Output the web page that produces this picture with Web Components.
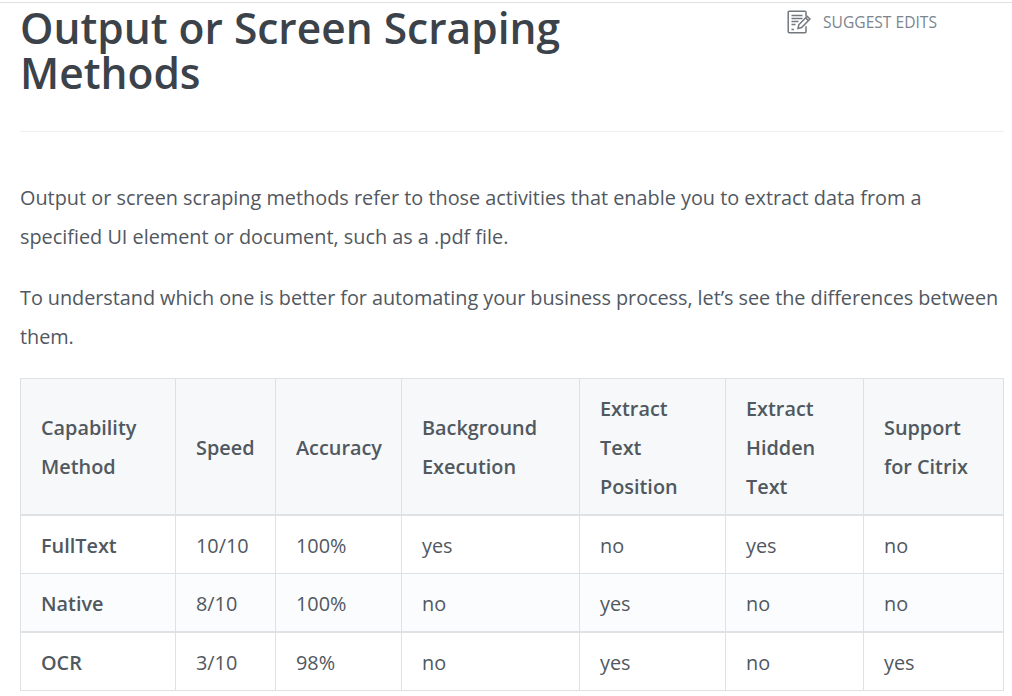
<!DOCTYPE html>
<html lang="en">
<head>
<meta charset="UTF-8">
<title>Output or Screen Scraping Methods</title>
<style>
  html, body { margin: 0; background: #fff; }
  body { font-family: "Open Sans", "Noto Sans", sans-serif; overflow: hidden; height: 696px; }
</style>
</head>
<body>
<doc-page>
  <doc-header slot="header" title="Output or Screen Scraping Methods">
    <suggest-edits></suggest-edits>
  </doc-header>
  <doc-para>Output or screen scraping methods refer to those activities that enable you to extract data from a specified UI element or document, such as a .pdf file.</doc-para>
  <doc-para style="letter-spacing:-0.05px">To understand which one is better for automating your business process, let’s see the differences between them.</doc-para>
  <compare-table></compare-table>
</doc-page>

<template id="page-tpl">
  <style>
    :host { display: block; border-top: 1px solid #e0e0e0; margin-top: 2px; padding: 0 8px 0 20px; }
    .body { display: flex; flex-direction: column; }
  </style>
  <slot name="header"></slot>
  <div class="body"><slot></slot></div>
</template>

<template id="header-tpl">
  <style>
    :host { display: flex; justify-content: space-between; align-items: flex-start; height: 128px; border-bottom: 1px solid #edeef0; margin-bottom: 46px; }
    h1 { margin: 2px 0 0; width: 600px; font-size: 42.5px; line-height: 45px; font-weight: 600; color: #3b4249; }
    .side { padding: 7px 67px 0 0; }
  </style>
  <h1></h1>
  <div class="side"><slot></slot></div>
</template>

<template id="edits-tpl">
  <style>
    :host { display: flex; align-items: center; gap: 12px; font-size: 15.6px; line-height: 22px; color: #7c858e; }
    svg { display: block; }
  </style>
  <svg width="24" height="24" viewBox="0 0 24 24" fill="none" stroke="#73787f" stroke-width="1.5">
    <path d="M19 6.5V2.2a1 1 0 0 0-1-1H2.2a1 1 0 0 0-1 1v19.6a1 1 0 0 0 1 1H18a1 1 0 0 0 1-1v-5.5"/>
    <path d="M4.5 5.5h11M4.5 8.5h11M4.5 11.5h7M4.5 14.5h4M4.5 19.5h2.5"/>
    <path d="M11 18.5l.8-3.7 8.4-8.6 2.8 2.8-8.4 8.6zM18.6 7.8l2.8 2.8"/>
  </svg>
  <span>SUGGEST EDITS</span>
</template>

<template id="para-tpl">
  <style>
    :host { display: block; font-size: 19.85px; line-height: 39px; color: #51585f; margin-bottom: 22px; }
  </style>
  <slot></slot>
</template>

<template id="table-tpl">
  <style>
    :host { display: block; }
    table { border-collapse: collapse; table-layout: fixed; width: 984px; font-size: 19.85px; line-height: 39px; color: #51585f; }
    th, td { border: 1px solid #dfe2e5; padding: 1px 20px 0; text-align: left; vertical-align: middle; }
    thead th { background: #f6f8fa; font-weight: 600; height: 134px; border-bottom-width: 2px; }
    td { height: 56px; }
    tbody td:first-child { font-weight: 600; }
    tbody tr:nth-child(2) td { background: #fbfcfd; border-bottom-width: 2px; }
  </style>
  <table>
    <colgroup></colgroup>
    <thead><tr></tr></thead>
    <tbody></tbody>
  </table>
</template>

<script>
  function stamp(el, id) {
    let root = el.attachShadow({ mode: 'open' });
    root.appendChild(document.getElementById(id).content.cloneNode(true));
    return root;
  }

  class DocPage extends HTMLElement {
    constructor() { super(); stamp(this, 'page-tpl'); }
  }

  class DocHeader extends HTMLElement {
    constructor() {
      super();
      let root = stamp(this, 'header-tpl');
      root.querySelector('h1').textContent = this.getAttribute('title');
    }
  }

  class SuggestEdits extends HTMLElement {
    constructor() { super(); stamp(this, 'edits-tpl'); }
  }

  class DocPara extends HTMLElement {
    constructor() { super(); stamp(this, 'para-tpl'); }
  }

  const widths = [155, 100, 126, 178, 146, 138, 140];
  const heads = ['Capability<br>Method', 'Speed', 'Accuracy', 'Background<br>Execution',
    'Extract<br>Text<br>Position', 'Extract<br>Hidden<br>Text', 'Support<br>for Citrix'];
  const rows = [
    ['FullText', '10/10', '100%', 'yes', 'no', 'yes', 'no'],
    ['Native', '8/10', '100%', 'no', 'yes', 'no', 'no'],
    ['OCR', '3/10', '98%', 'no', 'yes', 'no', 'yes']
  ];

  class CompareTable extends HTMLElement {
    constructor() {
      super();
      let root = stamp(this, 'table-tpl');
      root.querySelector('colgroup').innerHTML = widths.map(w => `<col style="width:${w}px">`).join('');
      root.querySelector('thead tr').innerHTML = heads.map(h => `<th>${h}</th>`).join('');
      root.querySelector('tbody').innerHTML = rows
        .map(r => '<tr>' + r.map(c => `<td>${c}</td>`).join('') + '</tr>').join('');
    }
  }

  customElements.define('doc-page', DocPage);
  customElements.define('doc-header', DocHeader);
  customElements.define('suggest-edits', SuggestEdits);
  customElements.define('doc-para', DocPara);
  customElements.define('compare-table', CompareTable);
</script>
</body>
</html>
